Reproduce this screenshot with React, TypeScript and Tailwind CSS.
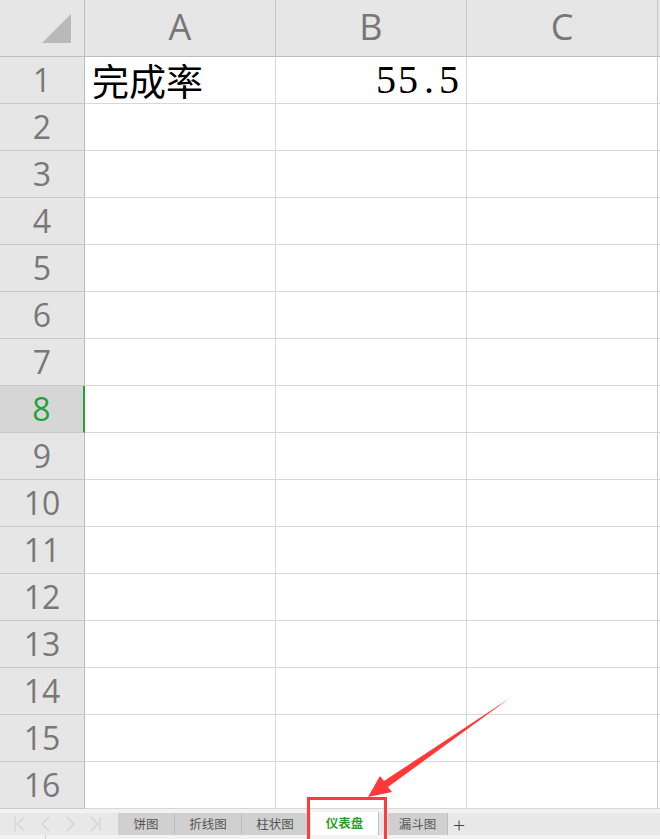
const rows = Array.from({ length: 16 }, (_, i) => i + 1)
const cols = ["A", "B", "C"]
const tabs = ["饼图", "折线图", "柱状图", "仪表盘", "漏斗图"]

function Corner() {
  return (
    <div className="h-[57px] border-r border-b border-[#bcbcbc] bg-[#e6e6e6] relative">
      <svg width="85" height="57" className="absolute inset-0">
        <polygon points="42,43 71,43 71,14" fill="#b9b9b9" />
      </svg>
    </div>
  )
}

function NavArrows() {
  return (
    <svg width="110" height="20" viewBox="0 0 110 20" className="shrink-0">
      <g stroke="#d2d2d2" strokeWidth="1.2" fill="none">
        <line x1="15" y1="3" x2="15" y2="17" />
        <polyline points="24,3 17,10 24,17" />
        <polyline points="49,3 42,10 49,17" />
        <polyline points="67,3 74,10 67,17" />
        <polyline points="91,3 98,10 91,17" />
        <line x1="100" y1="3" x2="100" y2="17" />
      </g>
    </svg>
  )
}

export default function App() {
  return (
    <div className="relative w-[660px] h-[839px] overflow-hidden bg-white" style={{ fontFamily: '"Open Sans", "Liberation Sans", sans-serif' }}>
      <div className="grid grid-cols-[85px_191px_191px_191px_2px]">
        <Corner />
        {cols.map((c) => (
          <div key={c} className="h-[57px] border-r border-b border-[#c8c8c8] border-b-[#bcbcbc] bg-[#e6e6e6] flex items-center justify-center text-[36px] text-[#777] leading-none pb-[2px]">
            {c}
          </div>
        ))}
        <div className="h-[57px] border-b border-[#bcbcbc] bg-[#e6e6e6]" />

        {rows.map((r) => {
          const sel = r === 8
          return (
            <div key={r} className="contents">
              <div
                className={
                  sel
                    ? "h-[47px] border-b border-[#c8c8c8] border-r-2 border-r-[#21a336] bg-[#d6d6d6] flex items-center justify-center text-[32px] text-[#24a139] leading-none"
                    : "h-[47px] border-b border-[#c8c8c8] border-r border-r-[#bcbcbc] bg-[#e6e6e6] flex items-center justify-center text-[32px] text-[#787878] leading-none"
                }
              >
                {r}
              </div>
              <div className="h-[47px] border-r border-b border-[#d6d6d6] flex items-center pl-[7px]">
                {r === 1 && (
                  <span className="text-[37px] leading-none text-black" style={{ fontFamily: '"Noto Sans CJK SC", sans-serif' }}>
                    完成率
                  </span>
                )}
              </div>
              <div className="h-[47px] border-r border-b border-[#d6d6d6] flex items-center justify-end pr-[5px]">
                {r === 1 && (
                  <span className="text-[40px] leading-none text-black tracking-[2px]" style={{ fontFamily: '"Liberation Serif", serif' }}>
                    55<span className="ml-[4px] mr-[3px]">.</span>5
                  </span>
                )}
              </div>
              <div className="h-[47px] border-r border-b border-[#d6d6d6] border-r-[#c8c8c8]" />
              <div className="h-[47px] border-b border-[#d6d6d6]" />
            </div>
          )
        })}
      </div>

      {/* sheet tabs */}
      <div className="h-[30px] bg-[#f2f2f2] relative">
        <div className="absolute left-0 right-0 top-[4px] h-[22px] bg-[#e8e8e8] flex items-center">
          <NavArrows />
          <div className="flex h-full ml-[8px] items-stretch">
            {tabs.map((t) => {
              const active = t === "仪表盘"
              return (
                <div
                  key={t}
                  className={
                    active
                      ? "bg-white -mt-[1px] w-[68px] mx-[2px] flex items-center justify-center text-[12.5px] font-bold text-[#2fa12a] border-r border-[#c0c0c0]"
                      : t === "漏斗图"
                        ? "bg-[#d0d0d0] w-[60px] ml-[7px] flex items-center justify-center text-[12.5px] text-[#555] border-r border-[#bdbdbd]"
                        : "bg-[#d0d0d0] flex items-center justify-center text-[12.5px] text-[#555] border-r border-[#bdbdbd] " + (t === "饼图" ? "w-[57px]" : "w-[67px]")
                  }
                  style={{ fontFamily: '"Noto Sans CJK SC", sans-serif' }}
                >
                  {t}
                </div>
              )
            })}
            <div className="flex items-center justify-center w-[22px] text-[22px] text-[#444] leading-none font-light">+</div>
          </div>
        </div>
        <div className="absolute left-[45px] top-[26px] w-px h-[4px] bg-[#cfcfcf]" />
      </div>

      {/* annotation overlay */}
      <div className="absolute left-[307px] top-[797px] w-[80px] h-[48px] border-[3px] border-[#ff3b3b]" />
      <svg className="absolute left-0 top-0 pointer-events-none" width="660" height="839">
        <polygon
          points="510,698 384,781 380,776 368,797 392,792 388,787"
          fill="#ff3838"
        />
      </svg>
    </div>
  )
}
